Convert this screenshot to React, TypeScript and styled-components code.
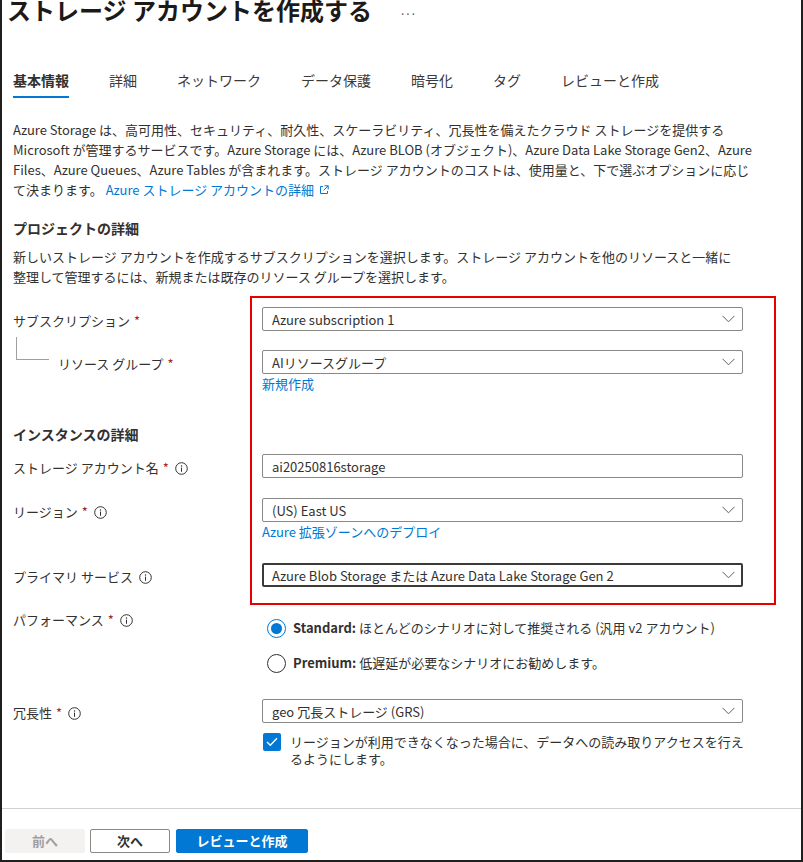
import React from "react";
import styled, { createGlobalStyle } from "styled-components";

const Global = createGlobalStyle`
  html, body { margin: 0; padding: 0; background: #ffffff; }
  body {
    font-family: "Noto Sans CJK JP", "Noto Sans", sans-serif;
    color: #323130;
  }
  * { box-sizing: border-box; }
`;

const Frame = styled.div`
  position: relative;
  width: 803px;
  height: 862px;
  border: 2px solid #1f1f1f;
  border-top: none;
  display: flex;
  flex-direction: column;
  overflow: hidden;
  background: #fff;
`;

const Main = styled.div`
  flex: 1;
  padding-left: 11px;
`;

const TitleRow = styled.div`
  display: flex;
  align-items: center;
  height: 24px;
  margin-top: -2px;
  margin-left: -6px;
`;

const Title = styled.h1`
  margin: 0;
  font-size: 24px;
  line-height: 24px;
  font-weight: 700;
  color: #1b1a19;
  white-space: nowrap;
`;

const More = styled.span`
  margin-left: 29px;
  font-size: 12px;
  letter-spacing: 2px;
  color: #605e5c;
  line-height: 24px;
`;

const TabBar = styled.div`
  display: flex;
  gap: 40px;
  margin-top: 48px;
`;

const Tab = styled.div<{ $active?: boolean }>`
  font-size: 14px;
  line-height: 20px;
  padding-bottom: 6px;
  border-bottom: 2px solid ${(p) => (p.$active ? "#0078d4" : "transparent")};
  font-weight: ${(p) => (p.$active ? 700 : 400)};
  color: ${(p) => (p.$active ? "#323130" : "#3b3a39")};
  white-space: nowrap;
`;

const Para = styled.p<{ $mt: number }>`
  margin: ${(p) => p.$mt}px 0 0;
  font-size: 13px;
  line-height: 20px;
  color: #323130;
  white-space: nowrap;
`;

const Link = styled.a`
  color: #0078d4;
  text-decoration: none;
  font-size: 13px;
  line-height: 20px;
  display: inline-flex;
  align-items: center;
  gap: 5px;
`;

const SectionTitle = styled.h2<{ $mt: number }>`
  margin: ${(p) => p.$mt}px 0 0;
  font-size: 14px;
  line-height: 20px;
  font-weight: 700;
  color: #323130;
`;

const Row = styled.div<{ $mt: number }>`
  display: grid;
  grid-template-columns: 249px 481px;
  align-items: start;
  margin-top: ${(p) => p.$mt}px;
`;

const Label = styled.div`
  padding-top: 4px;
  font-size: 13px;
  line-height: 20px;
  display: flex;
  align-items: center;
  color: #323130;
  white-space: nowrap;
`;

const Required = styled.span`
  color: #a4262c;
  margin-left: 4px;
`;

const InfoWrap = styled.span`
  display: inline-flex;
  margin-left: 6px;
`;

const NestedLabel = styled.div`
  display: flex;
  align-items: flex-start;
`;

const Connector = styled.div`
  width: 33px;
  height: 23px;
  margin-left: 3px;
  margin-top: -13px;
  border-left: 1px solid #a19f9d;
  border-bottom: 1px solid #a19f9d;
`;

const NestedText = styled.div`
  margin-left: 9px;
`;

const Control = styled.div`
  display: flex;
  flex-direction: column;
`;

const SelectBox = styled.div<{ $strong?: boolean }>`
  height: 24px;
  display: flex;
  align-items: center;
  justify-content: space-between;
  border: ${(p) => (p.$strong ? "2px solid #3b3a39" : "1px solid #8a8886")};
  border-radius: 2px;
  padding: 0 ${(p) => (p.$strong ? 6 : 7)}px 0 ${(p) => (p.$strong ? 8 : 9)}px;
  font-size: 13px;
  color: #323130;
  white-space: nowrap;
`;

const RadioGroup = styled.div`
  display: flex;
  flex-direction: column;
  gap: 15px;
  margin-top: 12px;
  margin-left: 5px;
`;

const RadioItem = styled.div`
  display: flex;
  align-items: center;
  gap: 7px;
  font-size: 13px;
  line-height: 20px;
  color: #323130;
  white-space: nowrap;
`;

const RadioCircle = styled.span<{ $checked?: boolean }>`
  width: 19px;
  height: 19px;
  border-radius: 50%;
  border: 1px solid ${(p) => (p.$checked ? "#0078d4" : "#323130")};
  display: inline-flex;
  align-items: center;
  justify-content: center;
  flex: none;
  &::after {
    content: "";
    width: 11px;
    height: 11px;
    border-radius: 50%;
    background: ${(p) => (p.$checked ? "#0078d4" : "transparent")};
  }
`;

const Strong = styled.b`
  font-weight: 700;
  margin-right: 3px;
`;

const CheckRow = styled.div`
  display: flex;
  align-items: flex-start;
  gap: 9px;
  margin-top: 10px;
  margin-left: 1px;
`;

const CheckBox = styled.span`
  width: 18px;
  height: 18px;
  border-radius: 2px;
  background: #0078d4;
  display: inline-flex;
  align-items: center;
  justify-content: center;
  flex: none;
`;

const CheckText = styled.div`
  font-size: 13px;
  line-height: 17px;
  color: #323130;
  white-space: nowrap;
`;

const Footer = styled.div`
  height: 52px;
  border-top: 1px solid #d1d1d1;
  padding: 20px 0 0 3px;
  display: flex;
  align-items: flex-start;
  gap: 5px;
`;

const Button = styled.button<{ $kind: "disabled" | "default" | "primary" }>`
  height: 24px;
  width: 80px;
  padding: 0;
  display: inline-flex;
  align-items: center;
  justify-content: center;
  border-radius: 2px;
  font-family: inherit;
  font-size: 13px;
  font-weight: 700;
  line-height: 22px;
  white-space: nowrap;
  cursor: pointer;
  border: 1px solid
    ${(p) =>
      p.$kind === "primary" ? "#0078d4" : p.$kind === "default" ? "#8a8886" : "#f3f2f1"};
  background: ${(p) =>
    p.$kind === "primary" ? "#0078d4" : p.$kind === "default" ? "#ffffff" : "#f3f2f1"};
  color: ${(p) =>
    p.$kind === "primary" ? "#ffffff" : p.$kind === "default" ? "#323130" : "#a19f9d"};
`;

const ReviewButton = styled(Button)`
  width: 132px;
  margin-left: 1px;
`;

const Highlight = styled.div`
  position: absolute;
  left: 248px;
  top: 296px;
  width: 526px;
  height: 309px;
  border: 2px solid #e60000;
  pointer-events: none;
`;

const Chevron = () => (
  <svg width="13" height="8" viewBox="0 0 13 8" fill="none">
    <polyline points="0.5,0.8 6.5,6.8 12.5,0.8" stroke="#605e5c" strokeWidth="1" />
  </svg>
);

const Info = () => (
  <InfoWrap>
    <svg width="13" height="13" viewBox="0 0 13 13" fill="none">
      <circle cx="6.5" cy="6.5" r="5.8" stroke="#323130" strokeWidth="1" />
      <circle cx="6.5" cy="3.9" r="0.75" fill="#323130" />
      <line x1="6.5" y1="5.6" x2="6.5" y2="9.8" stroke="#323130" strokeWidth="1" />
    </svg>
  </InfoWrap>
);

const ExternalIcon = () => (
  <svg width="10" height="10" viewBox="0 0 10 10" fill="none">
    <path d="M4 1.5H1.5v7h7V6" stroke="#0078d4" strokeWidth="1" />
    <path d="M5.5 0.8h3.7v3.7M9.2 0.8L4.6 5.4" stroke="#0078d4" strokeWidth="1" />
  </svg>
);

const Check = () => (
  <svg width="12" height="10" viewBox="0 0 12 10" fill="none">
    <polyline points="1,5 4.3,8.2 11,1.3" stroke="#ffffff" strokeWidth="1.4" />
  </svg>
);

const Select = ({ value, strong }: { value: string; strong?: boolean }) => (
  <SelectBox $strong={strong}>
    <span>{value}</span>
    <Chevron />
  </SelectBox>
);

const tabs = ["基本情報", "詳細", "ネットワーク", "データ保護", "暗号化", "タグ", "レビューと作成"];

export default function App() {
  return (
    <>
      <Global />
      <Frame>
        <Main>
          <TitleRow>
            <Title>ストレージ アカウントを作成する</Title>
            <More>...</More>
          </TitleRow>

          <TabBar>
            {tabs.map((t, i) => (
              <Tab key={t} $active={i === 0}>
                {t}
              </Tab>
            ))}
          </TabBar>

          <Para $mt={22}>
            Azure Storage は、高可用性、セキュリティ、耐久性、スケーラビリティ、冗長性を備えたクラウド ストレージを提供する
            <br />
            Microsoft が管理するサービスです。Azure Storage には、Azure BLOB (オブジェクト)、Azure Data Lake Storage Gen2、Azure
            <br />
            Files、Azure Queues、Azure Tables が含まれます。ストレージ アカウントのコストは、使用量と、下で選ぶオプションに応じ
            <br />
            て決まります。{" "}
            <Link href="#">
              Azure ストレージ アカウントの詳細
              <ExternalIcon />
            </Link>
          </Para>

          <SectionTitle $mt={18}>プロジェクトの詳細</SectionTitle>
          <Para $mt={9}>
            新しいストレージ アカウントを作成するサブスクリプションを選択します。ストレージ アカウントを他のリソースと一緒に
            <br />
            整理して管理するには、新規または既存のリソース グループを選択します。
          </Para>

          <Row $mt={20}>
            <Label>
              サブスクリプション<Required>*</Required>
            </Label>
            <Control>
              <Select value="Azure subscription 1" />
            </Control>
          </Row>

          <Row $mt={19}>
            <NestedLabel>
              <Connector />
              <NestedText>
                <Label>
                  リソース グループ<Required>*</Required>
                </Label>
              </NestedText>
            </NestedLabel>
            <Control>
              <Select value="AIリソースグループ" />
              <Link href="#">新規作成</Link>
            </Control>
          </Row>

          <SectionTitle $mt={30}>インスタンスの詳細</SectionTitle>

          <Row $mt={10}>
            <Label>
              ストレージ アカウント名<Required>*</Required>
              <Info />
            </Label>
            <Control>
              <SelectBox>
                <span>ai20250816storage</span>
              </SelectBox>
            </Control>
          </Row>

          <Row $mt={20}>
            <Label>
              リージョン<Required>*</Required>
              <Info />
            </Label>
            <Control>
              <Select value="(US) East US" />
              <Link href="#">Azure 拡張ゾーンへのデプロイ</Link>
            </Control>
          </Row>

          <Row $mt={21}>
            <Label>
              プライマリ サービス
              <Info />
            </Label>
            <Control>
              <Select value="Azure Blob Storage または Azure Data Lake Storage Gen 2" strong />
            </Control>
          </Row>

          <Row $mt={19}>
            <Label>
              パフォーマンス<Required>*</Required>
              <Info />
            </Label>
            <Control>
              <RadioGroup>
                <RadioItem>
                  <RadioCircle $checked />
                  <span>
                    <Strong>Standard:</Strong>ほとんどのシナリオに対して推奨される (汎用 v2 アカウント)
                  </span>
                </RadioItem>
                <RadioItem>
                  <RadioCircle />
                  <span>
                    <Strong>Premium:</Strong>低遅延が必要なシナリオにお勧めします。
                  </span>
                </RadioItem>
              </RadioGroup>
            </Control>
          </Row>

          <Row $mt={26}>
            <Label>
              冗長性<Required>*</Required>
              <Info />
            </Label>
            <Control>
              <Select value="geo 冗長ストレージ (GRS)" />
              <CheckRow>
                <CheckBox>
                  <Check />
                </CheckBox>
                <CheckText>
                  リージョンが利用できなくなった場合に、データへの読み取りアクセスを行え
                  <br />
                  るようにします。
                </CheckText>
              </CheckRow>
            </Control>
          </Row>
        </Main>

        <Footer>
          <Button $kind="disabled">前へ</Button>
          <Button $kind="default">次へ</Button>
          <ReviewButton $kind="primary">レビューと作成</ReviewButton>
        </Footer>

        <Highlight />
      </Frame>
    </>
  );
}
